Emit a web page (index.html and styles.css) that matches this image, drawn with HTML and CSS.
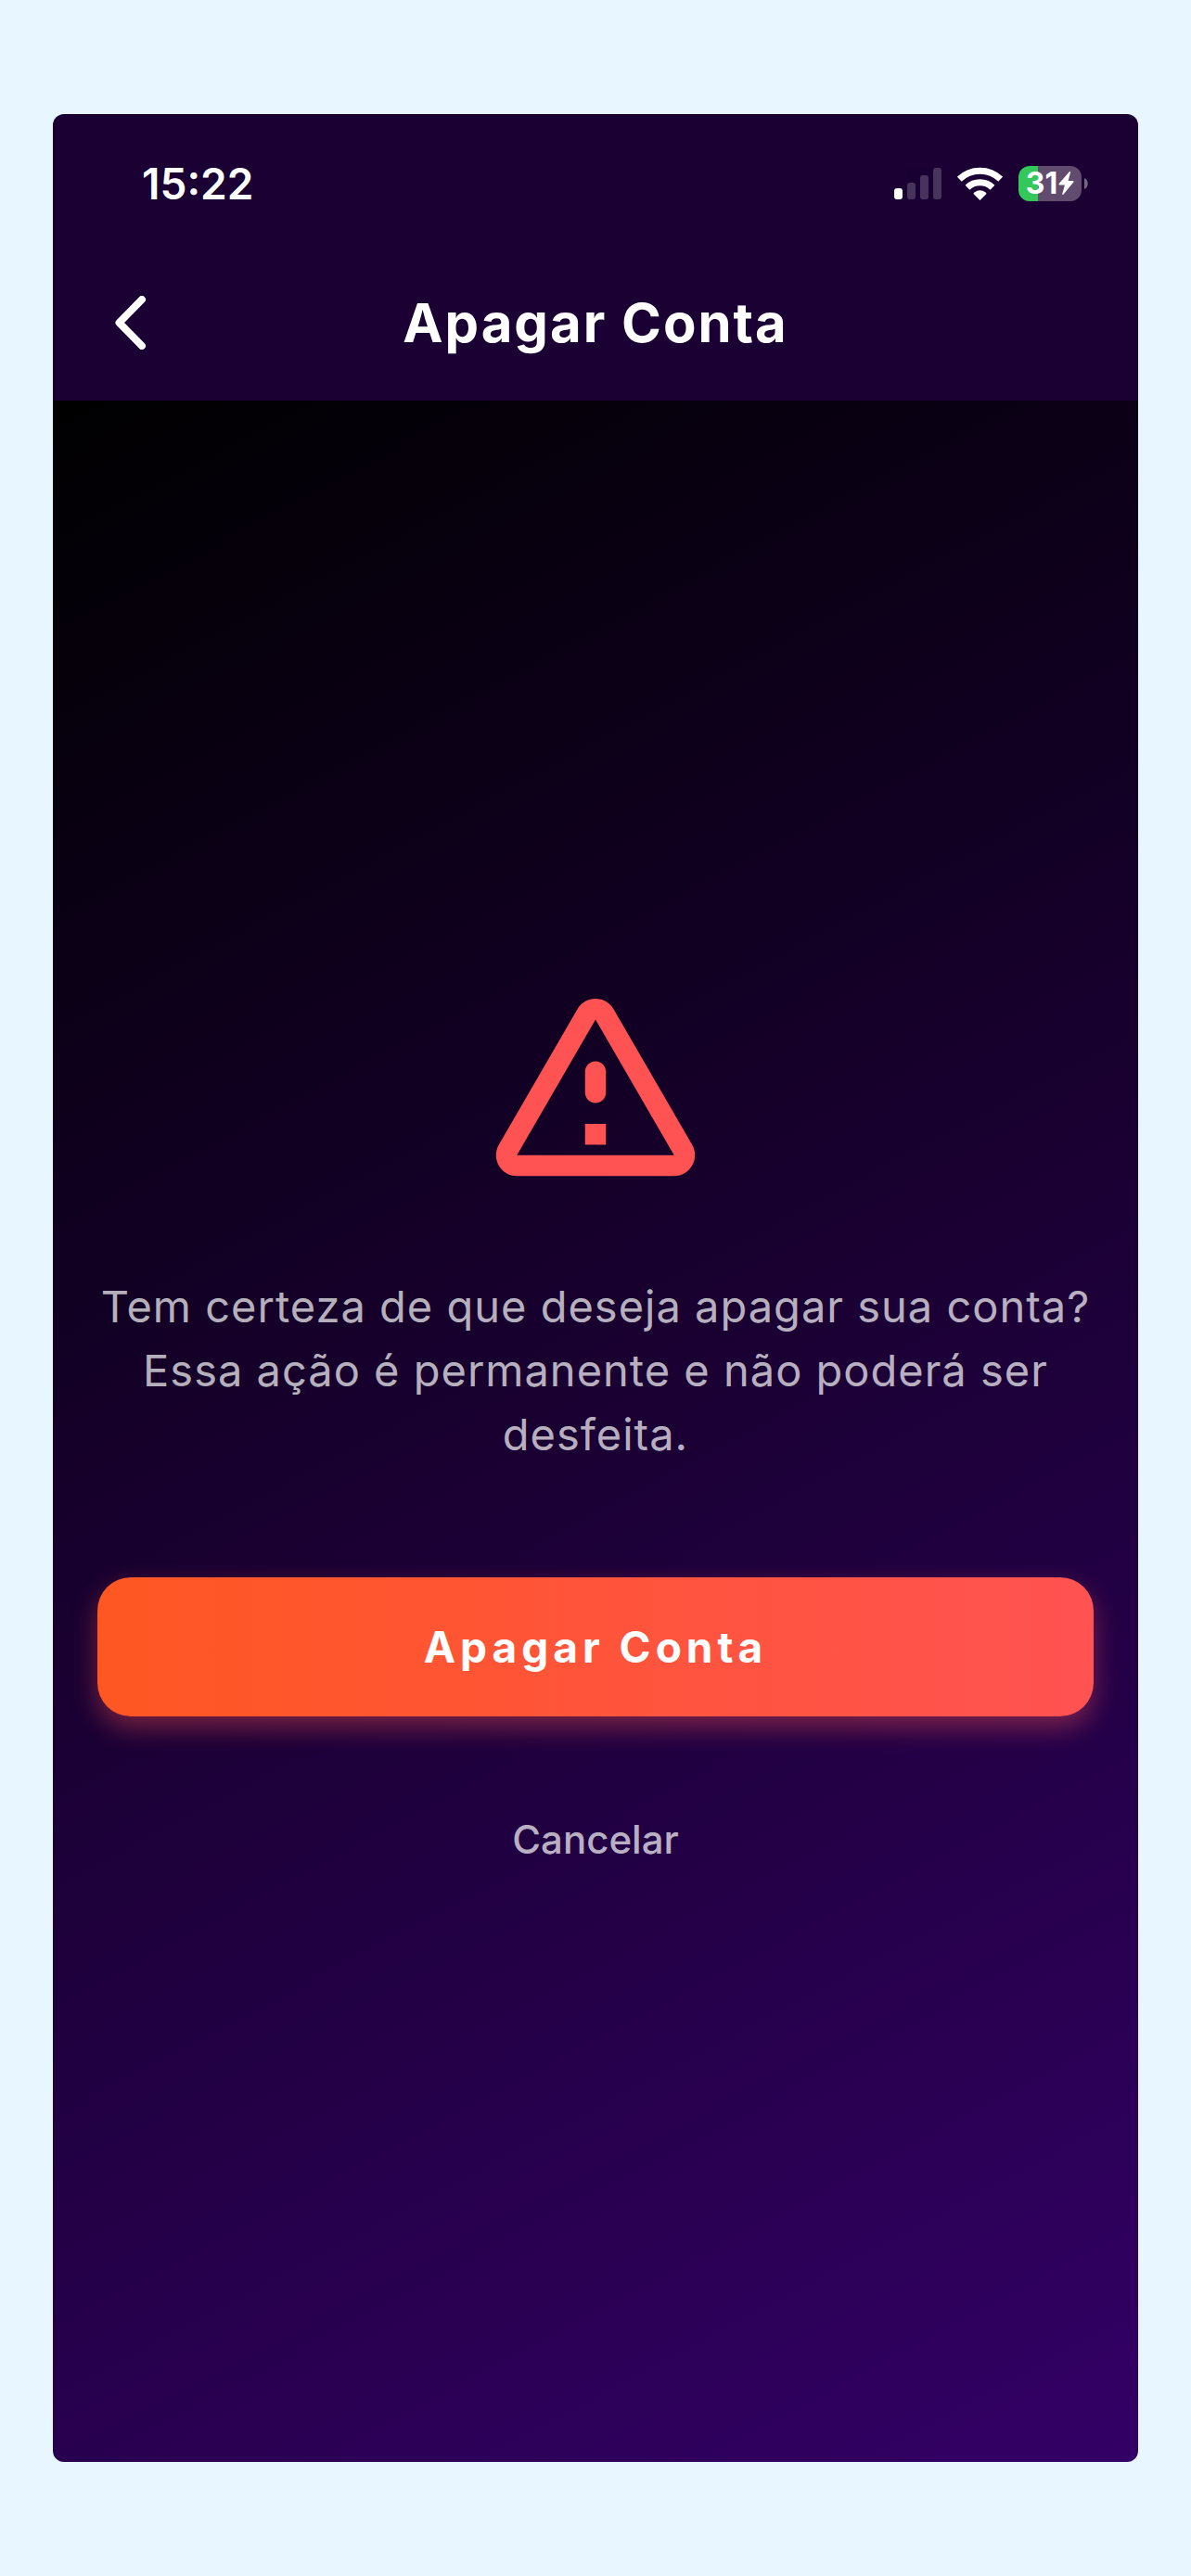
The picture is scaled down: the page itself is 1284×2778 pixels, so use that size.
FILE: index.html
```html
<!DOCTYPE html>
<html lang="pt-BR">
<head>
    <meta charset="UTF-8">
    <meta name="viewport" content="width=device-width, initial-scale=1.0">
    <title>Apagar Conta</title>
    <link rel="stylesheet" href="styles.css">
</head>
<body>
    <div class="screen">
        <header class="header">
            <div class="status-bar">
                <span class="time">15:22</span>
                <div class="status-icons">
                    <svg class="signal" width="51" height="34" viewBox="0 0 51 34" fill="#fff" aria-hidden="true">
                        <rect x="0" y="22" width="9" height="12" rx="3"/>
                        <g opacity="0.2">
                            <rect x="14" y="16" width="9" height="18" rx="3"/>
                            <rect x="28" y="8" width="9" height="26" rx="3"/>
                            <rect x="42" y="0" width="9" height="34" rx="3"/>
                        </g>
                    </svg>
                    <svg class="wifi" width="49" height="36" viewBox="0 0 49 36" aria-hidden="true">
                        <g fill="none" stroke="#fff" stroke-width="7">
                            <path d="M2.3 13.2a32 32 0 0 1 44.4 0"/>
                            <path d="M11 22.3a19.5 19.5 0 0 1 27 0"/>
                        </g>
                        <path d="M24.500 36l-6.300-6.300c-.9-.9-.8-1.600.2-2.300a10.500 10.500 0 0 1 12.200 0c1 .7 1.100 1.400.2 2.300z" fill="#fff"/>
                    </svg>
                    <div class="battery">
                        <div class="battery-body">
                            <span>31</span>
                            <svg width="17" height="25" viewBox="0 0 17 25" fill="#fff" aria-hidden="true">
                                <path d="M11.800.3c.7-.7 1.400-.2 1.200.7L10.600 10h5.100c.9 0 1.200.8.6 1.500L5.600 24.500c-.7.8-1.600.3-1.300-.7L7 14.500H1.300c-1 0-1.300-.8-.6-1.600z"/>
                            </svg>
                        </div>
                        <svg width="4" height="12" viewBox="0 0 4 12" aria-hidden="true">
                            <path d="M0 0c5 2 5 10 0 12z" fill="#fff" fill-opacity="0.4"/>
                        </svg>
                    </div>
                </div>
            </div>
            <div class="toolbar">
                <button class="back" type="button" aria-label="Voltar">
                    <svg width="34" height="58" viewBox="0 0 34 58" fill="none" stroke="#fff" stroke-width="8" stroke-linecap="round" stroke-linejoin="round" aria-hidden="true">
                        <path d="M29 4L4.500 29L29 54"/>
                    </svg>
                </button>
                <h1 class="title">Apagar Conta</h1>
            </div>
        </header>

        <main class="content">
            <svg class="warning" viewBox="0 0 24 24" fill="#ff5252" aria-hidden="true">
                <path d="M12 5.990L19.530 19H4.470L12 5.990M2.740 18c-.77 1.330.19 3 1.730 3h15.060c1.540 0 2.500-1.670 1.730-3L13.730 4.990c-.77-1.330-2.690-1.330-3.460 0L2.740 18zM11 11v2c0 .55.45 1 1 1s1-.45 1-1v-2c0-.55-.45-1-1-1s-1 .45-1 1zm0 5h2v2h-2z"/>
            </svg>
            <p class="message">Tem certeza de que deseja apagar sua conta?<br>Essa ação é permanente e não poderá ser desfeita.</p>
            <button class="delete" type="button">Apagar Conta</button>
            <button class="cancel" type="button">Cancelar</button>
        </main>
    </div>
</body>
</html>
```
FILE: styles.css
```css
* {
    margin: 0;
    padding: 0;
    box-sizing: border-box;
}

body {
    font-family: Inter, 'Liberation Sans', sans-serif;
    background: #e8f7ff;
    min-height: 100vh;
    padding: 123px 57px;
    display: flex;
}

button {
    font-family: inherit;
    background: none;
    border: none;
    cursor: pointer;
}

svg {
    display: block;
}

.screen {
    flex: 1;
    display: flex;
    flex-direction: column;
    border-radius: 12px;
    overflow: hidden;
    color: white;
}

.header {
    background: #1a0033;
}

.status-bar {
    height: 141px;
    padding: 8px 54px 0 96px;
    display: flex;
    justify-content: space-between;
    align-items: center;
}

.time {
    font-size: 46px;
    font-weight: 600;
}

.status-icons {
    display: flex;
    align-items: center;
    gap: 17px;
}

.battery {
    display: flex;
    align-items: center;
    gap: 3px;
}

.battery-body {
    width: 68px;
    height: 38px;
    border-radius: 12px;
    background: linear-gradient(90deg, #34c759 21px, #614c70 21px);
    display: flex;
    justify-content: center;
    align-items: center;
    gap: 1px;
    font-size: 32px;
    font-weight: 700;
    line-height: 38px;
}

.toolbar {
    height: 168px;
    padding: 0 36px;
    display: grid;
    grid-template-columns: 96px 1fr 96px;
    align-items: center;
}

.back {
    height: 96px;
    display: flex;
    justify-content: center;
    align-items: center;
}

.title {
    font-size: 58px;
    font-weight: 700;
    letter-spacing: 2px;
    text-align: center;
}

.content {
    flex: 1;
    padding: 48px;
    display: flex;
    flex-direction: column;
    justify-content: center;
    align-items: center;
    background: linear-gradient(152deg, #000000, #1a0033, #330066);
}

.warning {
    width: 270px;
    height: 270px;
    margin-bottom: 72px;
}

.message {
    font-size: 47px;
    line-height: 69px;
    letter-spacing: 1px;
    text-align: center;
    color: rgba(255, 255, 255, 0.7);
    margin-bottom: 120px;
}

.delete {
    width: 100%;
    height: 150px;
    border-radius: 36px;
    background: linear-gradient(90deg, #ff5722, #ff5252);
    box-shadow: 0 12px 28px rgba(255, 82, 82, 0.4);
    color: white;
    font-size: 46px;
    font-weight: 700;
    letter-spacing: 5px;
    margin-bottom: 60px;
}

.cancel {
    height: 144px;
    padding: 0 36px;
    color: rgba(255, 255, 255, 0.7);
    font-size: 42px;
    font-weight: 500;
}
```
